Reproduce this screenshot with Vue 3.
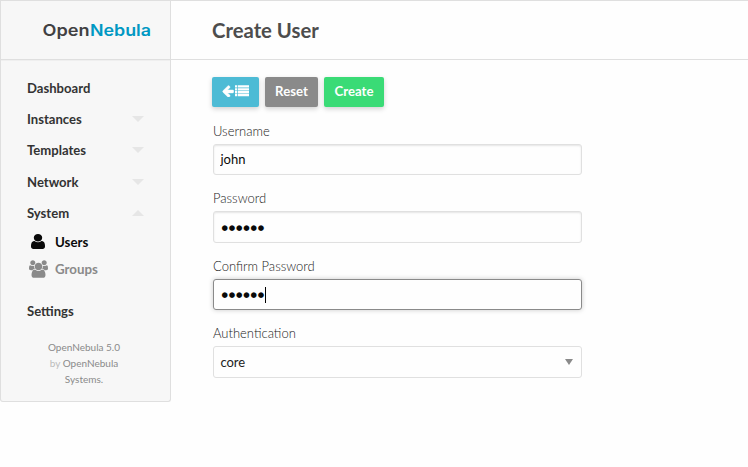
<script setup>
import { ref } from 'vue'

const sections = [
  { name: 'Dashboard' },
  { name: 'Instances', arrow: 'down' },
  { name: 'Templates', arrow: 'down' },
  { name: 'Network', arrow: 'down' },
  { name: 'System', arrow: 'up' },
]
const username = ref('john')
const mask = '●●●●●●'
</script>

<template>
  <div class="page">
    <header class="top">
      <div class="brand">
        <svg class="logo" viewBox="0 0 110 24" width="110" height="24">
          <text x="0.5" y="17.5" textLength="47" lengthAdjust="spacingAndGlyphs" fill="#414042">Open</text>
          <text x="48" y="17.5" textLength="61" lengthAdjust="spacingAndGlyphs" fill="#0098c3">Nebula</text>
        </svg>
      </div>
      <h1>Create User</h1>
    </header>
    <div class="body">
      <nav class="side">
        <a v-for="s in sections" :key="s.name" class="item">
          <span>{{ s.name }}</span>
          <i v-if="s.arrow" :class="['tri', s.arrow]"></i>
        </a>
        <a class="sub active">
          <span class="ico"><svg width="14" height="15" viewBox="0 0 1280 1536" preserveAspectRatio="none"><path fill="currentColor" d="M1280 1271q0 109-62.5 187t-150.5 78h-854q-88 0-150.5-78t-62.5-187q0-85 8.5-160.5t31.5-152 58.5-131 94-89 134.5-34.5q131 128 313 128t313-128q76 0 134.5 34.5t94 89 58.5 131 31.5 152 8.5 160.5zm-256-887q0 159-112.5 271.5t-271.5 112.5-271.5-112.5-112.5-271.5 112.5-271.5 271.5-112.5 271.5 112.5 112.5 271.5z" /></svg></span>
          <span>Users</span>
        </a>
        <a class="sub">
          <span class="ico"><svg width="19" height="18" viewBox="0 0 1920 1792"><path fill="currentColor" d="M593 896q-162 5-265 128h-134q-82 0-138-40.5t-56-118.5q0-353 124-353 6 0 43.5 21t97.5 42.5 119 21.5q67 0 133-23-5 37-5 66 0 139 81 256zm1071 637q0 120-73 189.5t-194 69.5h-874q-121 0-194-69.5t-73-189.5q0-53 3.5-103.5t14-109 26.5-108.5 43-97.5 62-81 85.5-53.5 111.5-20q10 0 43 21.5t73 48 107 48 135 21.5 135-21.5 107-48 73-48 43-21.5q61 0 111.5 20t85.5 53.5 62 81 43 97.5 26.5 108.5 14 109 3.5 103.5zm-1024-1277q0 106-75 181t-181 75-181-75-75-181 75-181 181-75 181 75 75 181zm704 384q0 159-112.5 271.5t-271.5 112.5-271.5-112.5-112.5-271.5 112.5-271.5 271.5-112.5 271.5 112.5 112.5 271.5zm576 225q0 78-56 118.5t-138 40.5h-134q-103-123-265-128 81-117 81-256 0-29-5-66 66 23 133 23 59 0 119-21.5t97.5-42.5 43.5-21q124 0 124 353zm-128-609q0 106-75 181t-181 75-181-75-75-181 75-181 181-75 181 75 75 181z" /></svg></span>
          <span>Groups</span>
        </a>
        <a class="item settings"><span>Settings</span></a>
        <div class="credit">
          OpenNebula 5.0<br /><span class="by">by</span> OpenNebula<br />Systems.
        </div>
      </nav>
      <main>
        <div class="actions">
          <button class="btn back" aria-label="Back to list">
            <svg width="12" height="12" viewBox="100 100 1600 1600"><path fill="currentColor" stroke="currentColor" stroke-width="60" d="M1664 896v128q0 53-32.5 90.5t-84.5 37.5h-704l293 294q38 36 38 90t-38 90l-75 76q-37 37-90 37-52 0-91-37l-651-652q-37-37-37-90 0-52 37-91l651-650q38-38 91-38 52 0 90 38l75 74q38 38 38 91t-38 91l-293 293h704q52 0 84.5 37.5t32.5 90.5z" /></svg>
            <svg width="14" height="12" viewBox="0 0 14 12"><path fill="currentColor" d="M0 .3h2.3v2.3H0zM3 .3h11v2.3H3zM0 3.2h2.3v2.3H0zM3 3.2h11v2.3H3zM0 6.1h2.3v2.3H0zM3 6.1h11v2.3H3zM0 9h2.3v2.3H0zM3 9h11v2.3H3z" /></svg>
          </button>
          <button class="btn reset">Reset</button>
          <button class="btn create">Create</button>
        </div>
        <label class="field">
          <span class="caption">Username</span>
          <input v-model="username" class="box inset" type="text" />
        </label>
        <div class="field short">
          <span class="caption">Password</span>
          <div class="box inset tall"><span class="dots">{{ mask }}</span></div>
        </div>
        <div class="field">
          <span class="caption">Confirm Password</span>
          <div class="box focused"><span class="dots">{{ mask }}</span><i class="caret"></i></div>
        </div>
        <div class="field">
          <span class="caption">Authentication</span>
          <div class="box select tall"><span>core</span><i class="pick"></i></div>
        </div>
      </main>
    </div>
  </div>
</template>

<style>
body {
  background: #fefefe;
}
</style>

<style scoped>
.page {
  box-sizing: border-box;
  width: 748px;
  height: 467px;
  font-family: Lato, sans-serif;
  font-size: 14px;
  color: #333;
  overflow: hidden;
}
.top {
  display: flex;
  box-sizing: border-box;
  height: 60px;
  border-top: 1px solid #dfdfdf;
  border-bottom: 1px solid #dfdfdf;
}
.brand {
  box-sizing: border-box;
  width: 171px;
  padding: 17px 0 0 41px;
  background: #f7f7f7;
  border-left: 1px solid #dfdfdf;
  border-right: 1px solid #dfdfdf;
}
.logo {
  display: block;
  font: 600 16px Inter, sans-serif;
}
h1 {
  margin: 0 0 0 41px;
  font-size: 20.3px;
  line-height: 58px;
  font-weight: 700;
  color: #4d4d4d;
}
.body {
  display: flex;
  align-items: flex-start;
}
.side {
  box-sizing: border-box;
  width: 171px;
  height: 342px;
  padding-top: 12.2px;
  background: #f7f7f7;
  border: 1px solid #dfdfdf;
  border-top: 0;
  border-radius: 0 0 3px 3px;
  box-shadow: inset 0 1px 0 #efefef;
}
.item {
  display: flex;
  align-items: center;
  justify-content: space-between;
  height: 31.25px;
  padding: 0 26px;
  font-size: 13.1px;
  font-weight: 700;
}
.tri {
  border: 6px solid transparent;
}
.tri.down {
  border-top-color: #e6e6e6;
  border-bottom: 0;
}
.tri.up {
  border-bottom-color: #e6e6e6;
  border-top: 0;
}
.sub {
  display: flex;
  align-items: center;
  height: 27px;
  padding-left: 27px;
  gap: 7px;
  font-size: 13.3px;
  font-weight: 700;
  color: #8a8a8a;
}
.sub.active {
  color: #0a0a0a;
}
.ico {
  display: flex;
  justify-content: center;
  width: 20px;
}
.ico svg {
  display: block;
}
.settings {
  margin-top: 13px;
}
.credit {
  width: 118px;
  margin: 12.2px 0 0 24px;
  font-size: 10px;
  line-height: 16px;
  text-align: center;
  color: #8a8a8a;
}
.by {
  color: #bbb;
}
main {
  width: 369px;
  padding: 17px 0 0 42px;
}
.actions {
  display: flex;
  gap: 6px;
  margin: 0 0 15px -1px;
}
.btn {
  display: flex;
  align-items: center;
  justify-content: center;
  box-sizing: border-box;
  height: 30px;
  padding: 0 0 2px;
  border: 0;
  border-radius: 2px;
  box-shadow: 0 2px 5px rgba(0, 0, 0, 0.18);
  color: #fefefe;
  font: 700 13.2px Lato, sans-serif;
}
.back {
  width: 47px;
  gap: 1px;
  background: #4dbbd5;
}
.reset {
  width: 53px;
  background: #8a8a8a;
}
.create {
  width: 60px;
  background: #3adb76;
}
.field {
  display: block;
  height: 67px;
}
.field.short {
  height: 68px;
}
.caption {
  display: block;
  height: 22px;
  line-height: 19px;
  font-size: 13px;
  font-weight: 300;
  color: #1a1a1a;
}
.box {
  display: flex;
  align-items: center;
  box-sizing: border-box;
  width: 369px;
  height: 31px;
  padding: 0 8px 0 6.4px;
  border: 1px solid #e0e0e0;
  border-radius: 3px;
  outline: 0;
  background: #fefefe;
  font: 400 13px Lato, sans-serif;
  color: #0a0a0a;
}
input.box {
  padding-bottom: 2px;
}
.box.tall {
  height: 32px;
}
.inset {
  box-shadow: inset 0 1px 2px rgba(10, 10, 10, 0.1);
}
.focused {
  border-color: #8a8a8a;
  box-shadow: 0 0 5px #cacaca;
}
.dots {
  margin-left: 1px;
  font: 7.4px "DejaVu Sans", sans-serif;
  letter-spacing: 0.8px;
}
.caret {
  width: 1px;
  height: 16px;
  background: #000;
}
.select {
  justify-content: space-between;
  color: #222;
}
.pick {
  border: 4px solid transparent;
  border-top: 6px solid #8a8a8a;
  border-bottom: 0;
}
</style>
